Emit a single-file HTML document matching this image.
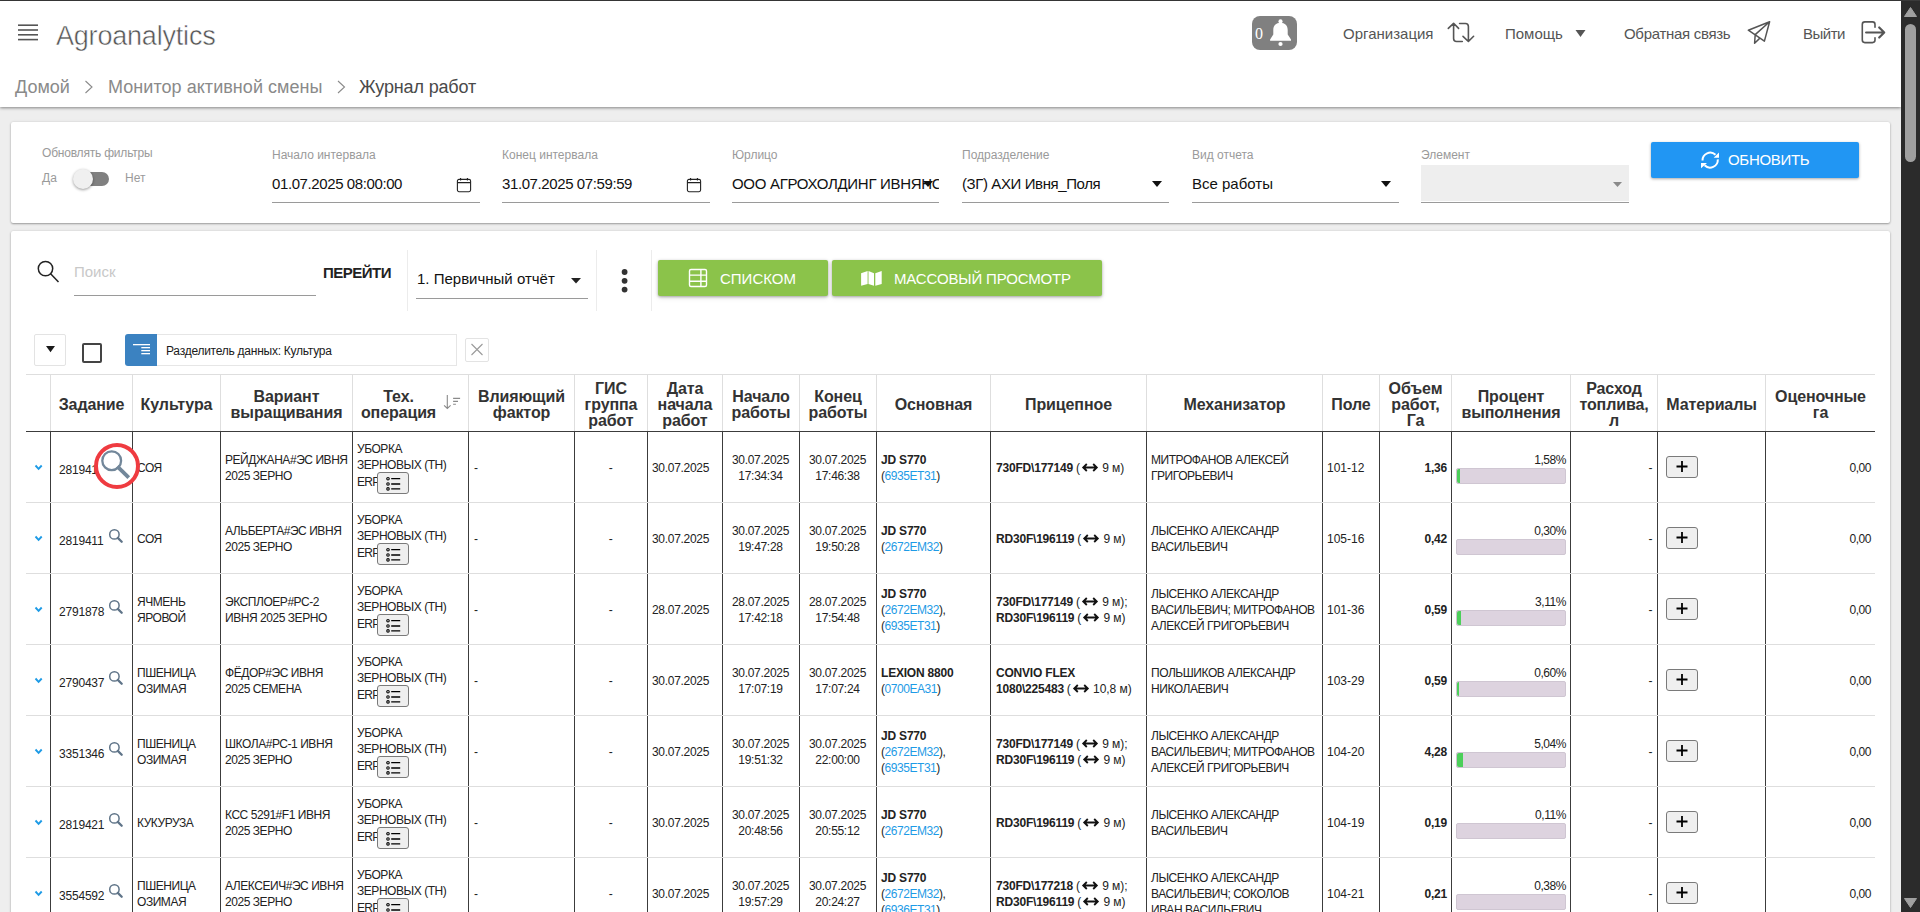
<!DOCTYPE html>
<html><head><meta charset="utf-8"><title>Agroanalytics</title><style>
*{box-sizing:border-box;margin:0;padding:0}
html,body{width:1920px;height:912px;overflow:hidden}
body{position:relative;background:#eeeeee;font-family:"Liberation Sans",sans-serif;color:#222}
.a{position:absolute}
.nw{white-space:nowrap}
svg{position:absolute;overflow:visible}
.hdr{left:0;top:1px;width:1901px;height:106px;background:#fff;box-shadow:0 1px 3px rgba(0,0,0,.45)}
.topline{left:0;top:0;width:1920px;height:1px;background:#3a3a3a}
.sb{left:1901px;top:1px;width:19px;height:911px;background:#2b2b2b}
.card{background:#fff;box-shadow:0 1px 2px rgba(0,0,0,.32),0 0 3px rgba(0,0,0,.10);border-radius:2px}
.t15{font-size:15px;line-height:16px;color:#555}
.lbl{font-size:12px;line-height:14px;color:#9a9a9a}
.val{font-size:15px;line-height:16px;color:#111}
.ul{height:1px;background:#9a9a9a}
.gbtn{background:#8bc34a;border-radius:2px;box-shadow:0 1px 3px rgba(0,0,0,.33),0 2px 6px rgba(0,0,0,.08);color:#fff}
.sep{width:1px;background:#ececec}
/* table */
.hl{background:#dedede}
.dl{background:#3c3c3c}
.th{display:flex;align-items:center;justify-content:center;text-align:center;font-weight:700;font-size:16px;line-height:16px;color:#333;letter-spacing:-0.1px}
.td{display:flex;align-items:center;font-size:12px;line-height:16px;color:#222;letter-spacing:-0.45px;white-space:nowrap}
.td b{font-weight:700;letter-spacing:-0.2px}
.lk{color:#1e9be6}
.arr{position:static;display:inline-block;vertical-align:0px;margin:0 1px 0 2px}
.tw{letter-spacing:-0.05px}
.c{justify-content:center;text-align:center}
.r{justify-content:flex-end;text-align:right}
.lbtn{display:inline-block;position:relative;width:32px;height:22px;border:1px solid #7a7a7a;border-radius:3px;background:#efefef;vertical-align:top}
.pbtn{position:absolute;width:32px;height:22px;border:1px solid #7a7a7a;border-radius:3px;background:#efefef}
.bar{position:relative;width:110px;height:16px;background:#ddd3df;border:1px solid #cfc6d2;border-radius:2px}
.fill{position:absolute;left:0;top:0;bottom:0;background:#4ccf5a;border-radius:2px 0 0 2px}
</style></head><body>
<div class="a topline"></div>
<div class="a hdr"></div>
<svg style="left:0;top:0" width="60" height="60"><g fill="#555"><rect x="18" y="24.4" width="20" height="1.6"/><rect x="18" y="29.2" width="20" height="1.6"/><rect x="18" y="34" width="20" height="1.6"/><rect x="18" y="38.8" width="20" height="1.6"/></g></svg>
<div class="a nw" style="left:56px;top:20px;font-size:27px;line-height:32px;color:#555;letter-spacing:-0.2px;-webkit-text-stroke:0.5px #fff">Agroanalytics</div>
<div class="a nw" style="left:15px;top:77px;font-size:18px;line-height:20px;color:#8a8a8a">Домой</div>
<svg style="left:0;top:0" width="1" height="1"><path d="M85.5 81 L92 87 L85.5 93" fill="none" stroke="#8a8a8a" stroke-width="1.1"/></svg>
<div class="a nw" style="left:108px;top:77px;font-size:18px;line-height:20px;color:#8a8a8a;letter-spacing:0.05px">Монитор активной смены</div>
<svg style="left:0;top:0" width="1" height="1"><path d="M338 81 L344.5 87 L338 93" fill="none" stroke="#8a8a8a" stroke-width="1.1"/></svg>
<div class="a nw" style="left:359px;top:77px;font-size:18px;line-height:20px;color:#4a4a4a;letter-spacing:-0.15px">Журнал работ</div>
<div class="a" style="left:1252px;top:16px;width:45px;height:34px;background:#808080;border-radius:8px"></div>
<div class="a nw" style="left:1255px;top:25px;font-size:16px;line-height:18px;color:#fff;font-family:Liberation Serif,serif">0</div>
<svg style="left:1248px;top:12px" width="60" height="45"><g fill="#fff"><path d="M32.5 10.8 C28 10.8 25.3 13.8 25.3 18 V22.5 L22.1 27.6 V28.8 H43 V27.6 L39.7 22.5 V18 C39.7 13.8 37 10.8 32.5 10.8 Z"/><circle cx="32.5" cy="9.4" r="2.1"/><circle cx="32.5" cy="32" r="2.1"/></g></svg>
<div class="a nw t15" style="left:1343px;top:26px">Организация</div>
<svg style="left:1440px;top:15px" width="40" height="35"><path d="M8.3 13.4 L13.6 8.3 L18.6 13.4 M13.6 8.5 V23.5 Q13.6 26.5 16.6 26.5 H22.3 M19.6 8.5 H25.4 Q28.4 8.5 28.4 11.5 V26.3 M23 21.3 L28.4 26.5 L33.6 21.3" fill="none" stroke="#555" stroke-width="1.6" stroke-linecap="round" stroke-linejoin="round"/></svg>
<div class="a nw t15" style="left:1505px;top:26px">Помощь</div>
<svg style="left:0;top:0" width="1" height="1"><path d="M1575.5 30 H1585.5 L1580.5 37 Z" fill="#555"/></svg>
<div class="a nw t15" style="left:1624px;top:26px;letter-spacing:-0.3px">Обратная связь</div>
<svg style="left:1740px;top:15px" width="40" height="35"><path d="M29.6 6.7 L8.3 15.2 L24.4 26.1 Z M29.6 6.7 L15.2 19.6 L14.6 28.2 L19.4 23.6" fill="none" stroke="#555" stroke-width="1.5" stroke-linejoin="round"/></svg>
<div class="a nw t15" style="left:1803px;top:26px;letter-spacing:-0.5px">Выйти</div>
<svg style="left:1855px;top:15px" width="40" height="35"><path d="M20 12.3 V9.4 Q20 6.9 17.5 6.9 H9.8 Q7.3 6.9 7.3 9.4 V25.1 Q7.3 27.6 9.8 27.6 H17.5 Q20 27.6 20 25.1 V22.8" fill="none" stroke="#555" stroke-width="1.6" stroke-linecap="round"/><path d="M11.1 17.5 H28.6 M24.2 12.5 L29.2 17.5 L24.2 22.5" fill="none" stroke="#555" stroke-width="2.2" stroke-linecap="round" stroke-linejoin="round"/></svg>
<div class="a sb"></div>
<svg style="left:0;top:0" width="1" height="1"><path d="M1910.5 7.5 L1916.5 16.5 H1904.5 Z" fill="#a0a0a0" stroke="#a0a0a0" stroke-width="1" stroke-linejoin="round"/><rect x="1905" y="24" width="11" height="138" rx="5.5" fill="#a0a0a0"/><path d="M1904.5 898.5 H1916.5 L1910.5 907.5 Z" fill="#a0a0a0" stroke="#a0a0a0" stroke-width="1" stroke-linejoin="round"/></svg>
<div class="a card" style="left:11px;top:122px;width:1879px;height:101px"></div>
<div class="a nw lbl" style="left:42px;top:146px;letter-spacing:-0.2px">Обновлять фильтры</div>
<div class="a nw lbl" style="left:42px;top:171px">Да</div>
<div class="a nw lbl" style="left:125px;top:171px">Нет</div>
<div class="a" style="left:74px;top:172px;width:35px;height:14px;border-radius:7px;background:#808080"></div>
<div class="a" style="left:73px;top:169px;width:20px;height:20px;border-radius:10px;background:#f0f0f0;box-shadow:0 1px 3px rgba(0,0,0,.4)"></div>
<div class="a nw lbl" style="left:272px;top:148px">Начало интервала</div>
<div class="a nw val" style="left:272px;top:176px;letter-spacing:-0.4px">01.07.2025 08:00:00</div>
<div class="a ul" style="left:272px;top:202px;width:208px"></div>
<svg style="left:450px;top:172px" width="30" height="30"><g fill="none" stroke="#222" stroke-width="1.1"><rect x="7.4" y="7.4" width="13.2" height="12.3" rx="1.6"/><path d="M7.4 10.6 H20.6 M10.6 6 V8.6 M17.4 6 V8.6"/></g></svg>
<div class="a nw lbl" style="left:502px;top:148px">Конец интервала</div>
<div class="a nw val" style="left:502px;top:176px;letter-spacing:-0.4px">31.07.2025 07:59:59</div>
<div class="a ul" style="left:502px;top:202px;width:208px"></div>
<svg style="left:680px;top:172px" width="30" height="30"><g fill="none" stroke="#222" stroke-width="1.1"><rect x="7.4" y="7.4" width="13.2" height="12.3" rx="1.6"/><path d="M7.4 10.6 H20.6 M10.6 6 V8.6 M17.4 6 V8.6"/></g></svg>
<div class="a nw val" style="left:732px;top:176px;width:207px;overflow:hidden;letter-spacing:-0.3px">ООО АГРОХОЛДИНГ ИВНЯНСКИЙ</div>
<div class="a nw lbl" style="left:732px;top:148px">Юрлицо</div>
<div class="a ul" style="left:732px;top:202px;width:207px"></div>
<svg style="left:0;top:0" width="1" height="1"><path d="M923 181 H933 L928 187 Z" fill="#111"/></svg>
<div class="a nw lbl" style="left:962px;top:148px">Подразделение</div>
<div class="a nw val" style="left:962px;top:176px;letter-spacing:-0.4px">(ЗГ) АХИ Ивня_Поля</div>
<div class="a ul" style="left:962px;top:202px;width:207px"></div>
<svg style="left:0;top:0" width="1" height="1"><path d="M1152 181 H1162 L1157 187 Z" fill="#111"/></svg>
<div class="a nw lbl" style="left:1192px;top:148px">Вид отчета</div>
<div class="a nw val" style="left:1192px;top:176px;">Все работы</div>
<div class="a ul" style="left:1192px;top:202px;width:207px"></div>
<svg style="left:0;top:0" width="1" height="1"><path d="M1381 181 H1391 L1386 187 Z" fill="#111"/></svg>
<div class="a" style="left:1421px;top:165px;width:208px;height:36px;background:#eeeeee"></div>
<div class="a nw lbl" style="left:1421px;top:148px">Элемент</div>
<div class="a ul" style="left:1421px;top:202px;width:208px"></div>
<svg style="left:0;top:0" width="1" height="1"><path d="M1613 182 H1622 L1617.5 187 Z" fill="#8a8a8a"/></svg>
<div class="a" style="left:1651px;top:142px;width:208px;height:36px;background:#2196f3;border-radius:2px;box-shadow:0 1px 3px rgba(0,0,0,.35)"></div>
<svg style="left:1690px;top:142px" width="40" height="36"><g fill="none" stroke="#fff" stroke-width="2"><path d="M12.5 18.5 A7.7 7.7 0 0 1 25.5 12.8"/><path d="M27.8 17.4 A7.7 7.7 0 0 1 14.6 23.2"/></g><g fill="#fff"><path d="M29 10.5 V15.8 H23.7 Z"/><path d="M11 20.9 H17 L11 26.2 Z"/></g></svg>
<div class="a nw" style="left:1728px;top:152px;font-size:15px;line-height:16px;color:#fff;letter-spacing:-0.3px">ОБНОВИТЬ</div>
<div class="a card" style="left:11px;top:231px;width:1879px;height:700px"></div>
<svg style="left:0;top:0" width="1" height="1"><g fill="none" stroke="#222" stroke-width="1.5"><circle cx="45.5" cy="268.6" r="7.2"/><path d="M50.6 273.7 L58.5 282"/></g></svg>
<div class="a nw" style="left:74px;top:264px;font-size:15px;line-height:16px;color:#c8c8c8">Поиск</div>
<div class="a ul" style="left:74px;top:295px;width:242px"></div>
<div class="a nw" style="left:323px;top:265px;font-size:15px;line-height:16px;color:#222;font-weight:700;letter-spacing:-0.5px">ПЕРЕЙТИ</div>
<div class="a sep" style="left:407px;top:250px;height:61px"></div>
<div class="a sep" style="left:596px;top:250px;height:61px"></div>
<div class="a sep" style="left:651px;top:250px;height:61px"></div>
<div class="a nw val" style="left:417px;top:271px">1. Первичный отчёт</div>
<svg style="left:0;top:0" width="1" height="1"><path d="M571 278 H581 L576 283.5 Z" fill="#222"/><g fill="#333"><circle cx="624.6" cy="272" r="2.9"/><circle cx="624.6" cy="280.8" r="2.9"/><circle cx="624.6" cy="289.6" r="2.9"/></g></svg>
<div class="a ul" style="left:416px;top:298px;width:172px"></div>
<div class="a gbtn" style="left:658px;top:260px;width:170px;height:36px"></div>
<svg style="left:0;top:0" width="1" height="1"><g fill="none" stroke="#fff" stroke-width="1.4"><rect x="689.5" y="269.5" width="17" height="17" rx="1.5"/><path d="M689.5 275.1 H706.5 M689.5 281.3 H706.5 M700.9 269.5 V286.5"/></g></svg>
<div class="a nw" style="left:720px;top:271px;font-size:15px;line-height:16px;color:#fff">СПИСКОМ</div>
<div class="a gbtn" style="left:832px;top:260px;width:270px;height:36px"></div>
<svg style="left:855px;top:264px" width="35" height="30"><g fill="#fff"><path d="M6.1 9.2 L12.6 7.1 V20 L6.1 21.8 Z"/><path d="M13.5 7.1 L19 9.2 V21.8 L13.5 20 Z"/><path d="M20.3 9.2 L26.7 7.1 V20 L20.3 21.8 Z"/></g></svg>
<div class="a nw" style="left:894px;top:271px;font-size:15px;line-height:16px;color:#fff;letter-spacing:-0.15px">МАССОВЫЙ ПРОСМОТР</div>
<div class="a" style="left:34px;top:334px;width:32px;height:32px;border:1px solid #e3e3e3;border-radius:2px"></div>
<svg style="left:0;top:0" width="1" height="1"><path d="M46 346 H55 L50.5 352.3 Z" fill="#1a1a1a"/></svg>
<div class="a" style="left:82px;top:343px;width:20px;height:20px;border:2px solid #444;border-radius:2px"></div>
<div class="a" style="left:125px;top:334px;width:32px;height:32px;background:#3b82c1;border-radius:3px 0 0 3px"></div>
<svg style="left:0;top:0" width="1" height="1"><g fill="#fff"><rect x="133" y="344" width="17" height="1.3"/><rect x="141.3" y="347" width="8.7" height="1.3"/><rect x="141.3" y="350" width="8.7" height="1.3"/><rect x="141.3" y="353" width="8.7" height="1.3"/></g></svg>
<div class="a" style="left:157px;top:334px;width:300px;height:32px;border:1px solid #e6e6e6;border-left:none"></div>
<div class="a nw" style="left:166px;top:344px;font-size:12px;line-height:14px;color:#1a1a1a;letter-spacing:-0.25px">Разделитель данных: Культура</div>
<div class="a" style="left:465px;top:338px;width:24px;height:24px;border:1px solid #e3e3e3;border-radius:2px"></div>
<svg style="left:0;top:0" width="1" height="1"><path d="M471.5 344 L482.5 355 M482.5 344 L471.5 355" stroke="#9a9a9a" stroke-width="1.1"/></svg>
<div class="a hl" style="left:26px;top:374px;width:1849px;height:1px"></div>
<div class="a hl" style="left:50px;top:374px;width:1px;height:57px"></div>
<div class="a hl" style="left:132px;top:374px;width:1px;height:57px"></div>
<div class="a hl" style="left:220px;top:374px;width:1px;height:57px"></div>
<div class="a hl" style="left:352px;top:374px;width:1px;height:57px"></div>
<div class="a hl" style="left:468px;top:374px;width:1px;height:57px"></div>
<div class="a hl" style="left:574px;top:374px;width:1px;height:57px"></div>
<div class="a hl" style="left:647px;top:374px;width:1px;height:57px"></div>
<div class="a hl" style="left:722px;top:374px;width:1px;height:57px"></div>
<div class="a hl" style="left:799px;top:374px;width:1px;height:57px"></div>
<div class="a hl" style="left:876px;top:374px;width:1px;height:57px"></div>
<div class="a hl" style="left:990px;top:374px;width:1px;height:57px"></div>
<div class="a hl" style="left:1146px;top:374px;width:1px;height:57px"></div>
<div class="a hl" style="left:1322px;top:374px;width:1px;height:57px"></div>
<div class="a hl" style="left:1379px;top:374px;width:1px;height:57px"></div>
<div class="a hl" style="left:1451px;top:374px;width:1px;height:57px"></div>
<div class="a hl" style="left:1570px;top:374px;width:1px;height:57px"></div>
<div class="a hl" style="left:1657px;top:374px;width:1px;height:57px"></div>
<div class="a hl" style="left:1765px;top:374px;width:1px;height:57px"></div>
<div class="a dl" style="left:26px;top:431px;width:1849px;height:1px"></div>
<div class="a th" style="left:51px;top:377px;width:81px;height:56px;padding-right:0px">Задание</div>
<div class="a th" style="left:133px;top:377px;width:87px;height:56px;padding-right:0px">Культура</div>
<div class="a th" style="left:221px;top:377px;width:131px;height:56px;padding-right:0px">Вариант<br>выращивания</div>
<div class="a th" style="left:353px;top:377px;width:115px;height:56px;padding-right:24px">Тех.<br>операция</div>
<div class="a th" style="left:469px;top:377px;width:105px;height:56px;padding-right:0px">Влияющий<br>фактор</div>
<div class="a th" style="left:575px;top:377px;width:72px;height:56px;padding-right:0px">ГИС<br>группа<br>работ</div>
<div class="a th" style="left:648px;top:377px;width:74px;height:56px;padding-right:0px">Дата<br>начала<br>работ</div>
<div class="a th" style="left:723px;top:377px;width:76px;height:56px;padding-right:0px">Начало<br>работы</div>
<div class="a th" style="left:800px;top:377px;width:76px;height:56px;padding-right:0px">Конец<br>работы</div>
<div class="a th" style="left:877px;top:377px;width:113px;height:56px;padding-right:0px">Основная</div>
<div class="a th" style="left:991px;top:377px;width:155px;height:56px;padding-right:0px">Прицепное</div>
<div class="a th" style="left:1147px;top:377px;width:175px;height:56px;padding-right:0px">Механизатор</div>
<div class="a th" style="left:1323px;top:377px;width:56px;height:56px;padding-right:0px">Поле</div>
<div class="a th" style="left:1380px;top:377px;width:71px;height:56px;padding-right:0px">Объем<br>работ,<br>Га</div>
<div class="a th" style="left:1452px;top:377px;width:118px;height:56px;padding-right:0px">Процент<br>выполнения</div>
<div class="a th" style="left:1571px;top:377px;width:86px;height:56px;padding-right:0px">Расход<br>топлива,<br>л</div>
<div class="a th" style="left:1658px;top:377px;width:107px;height:56px;padding-right:0px">Материалы</div>
<div class="a th" style="left:1766px;top:377px;width:109px;height:56px;padding-right:0px">Оценочные<br>га</div>
<svg style="left:438px;top:390px" width="28" height="24"><g fill="none" stroke="#8a8a8a" stroke-width="1.1"><path d="M9.3 5 V18.2 M6.1 15.3 L9.3 18.4 L12.6 15.3"/><path d="M15.1 8.4 H22.1 M15.1 11.4 H20 M15.1 14.3 H17.9"/></g></svg>
<div class="a hl" style="left:26px;top:502px;width:1849px;height:1px"></div>
<div class="a dl" style="left:50px;top:432px;width:1px;height:70px"></div>
<div class="a dl" style="left:132px;top:432px;width:1px;height:70px"></div>
<div class="a dl" style="left:220px;top:432px;width:1px;height:70px"></div>
<div class="a dl" style="left:352px;top:432px;width:1px;height:70px"></div>
<div class="a dl" style="left:468px;top:432px;width:1px;height:70px"></div>
<div class="a dl" style="left:574px;top:432px;width:1px;height:70px"></div>
<div class="a dl" style="left:647px;top:432px;width:1px;height:70px"></div>
<div class="a dl" style="left:722px;top:432px;width:1px;height:70px"></div>
<div class="a dl" style="left:799px;top:432px;width:1px;height:70px"></div>
<div class="a dl" style="left:876px;top:432px;width:1px;height:70px"></div>
<div class="a dl" style="left:990px;top:432px;width:1px;height:70px"></div>
<div class="a dl" style="left:1146px;top:432px;width:1px;height:70px"></div>
<div class="a dl" style="left:1322px;top:432px;width:1px;height:70px"></div>
<div class="a dl" style="left:1379px;top:432px;width:1px;height:70px"></div>
<div class="a dl" style="left:1451px;top:432px;width:1px;height:70px"></div>
<div class="a dl" style="left:1570px;top:432px;width:1px;height:70px"></div>
<div class="a dl" style="left:1657px;top:432px;width:1px;height:70px"></div>
<div class="a dl" style="left:1765px;top:432px;width:1px;height:70px"></div>
<svg style="left:0;top:0" width="1" height="1"><path d="M35.5 465.5 L38.6 468.8 L41.7 465.5" fill="none" stroke="#1e9be6" stroke-width="1.9"/></svg>
<div class="a td " style="left:59px;top:435px;width:68px;height:70px;letter-spacing:-0.2px"><div>2819411</div></div>
<svg style="left:0;top:0" width="1" height="1"><g fill="none" stroke="#5f7488"><circle cx="114.4" cy="463.4" r="4.7" stroke-width="1.5"/><path d="M117.8 466.9 L121.7 470.8" stroke-width="2.3" stroke-linecap="round"/></g></svg>
<div class="a td " style="left:137px;top:433px;width:78px;height:70px;"><div>СОЯ</div></div>
<div class="a td " style="left:225px;top:433px;width:122px;height:70px;"><div>РЕЙДЖАНА#ЭС ИВНЯ<br>2025 ЗЕРНО</div></div>
<div class="a td " style="left:357px;top:432px;width:106px;height:70px;"><div><div style="display:flex;flex-direction:column"><div style="height:16px">УБОРКА</div><div style="height:16px">ЗЕРНОВЫХ (ТН)</div><div style="height:21px;display:flex;align-items:flex-start"><span style="margin-top:1px;letter-spacing:-0.75px">ERP</span><span class="lbtn" style="margin-left:-2px;margin-top:-1px"><svg style="left:0;top:0" width="31" height="21"><g fill="none" stroke="#000" stroke-width="1"><circle cx="10" cy="5.7" r="1.25" stroke-width="1.1"/><circle cx="10" cy="11" r="1.25" stroke-width="1.1"/><circle cx="10" cy="15.9" r="1.25" stroke-width="1.1"/><path d="M13.2 5.6 H22.2 M13.2 11 H22.2 M13.2 15.9 H22.2" stroke-width="1.3"/></g></svg></span></div></div></div></div>
<div class="a td " style="left:474px;top:433px;width:95px;height:70px;"><div>-</div></div>
<div class="a td c" style="left:579px;top:433px;width:63px;height:70px;"><div>-</div></div>
<div class="a td " style="left:652px;top:433px;width:65px;height:70px;letter-spacing:-0.3px"><div>30.07.2025</div></div>
<div class="a td c" style="left:724px;top:433px;width:73px;height:70px;letter-spacing:-0.3px"><div>30.07.2025<br>17:34:34</div></div>
<div class="a td c" style="left:801px;top:433px;width:73px;height:70px;letter-spacing:-0.3px"><div>30.07.2025<br>17:46:38</div></div>
<div class="a td " style="left:881px;top:433px;width:104px;height:70px;"><div><b>JD S770</b><br>(<span class="lk">6935ET31</span>)</div></div>
<div class="a td " style="left:996px;top:433px;width:145px;height:70px;"><div><b>730FD\177149</b> <span class="tw">(<svg class="arr" width="16" height="9" viewBox="0 0 16 9"><path d="M1.2 4.5 H14.8 M4.8 1 L1.2 4.5 L4.8 8 M11.2 1 L14.8 4.5 L11.2 8" stroke="#111" stroke-width="1.8" fill="none"/></svg> 9 м)</span></div></div>
<div class="a td " style="left:1151px;top:433px;width:166px;height:70px;"><div>МИТРОФАНОВ АЛЕКСЕЙ<br>ГРИГОРЬЕВИЧ</div></div>
<div class="a td " style="left:1327px;top:433px;width:47px;height:70px;letter-spacing:0px"><div>101-12</div></div>
<div class="a td r" style="left:1384px;top:433px;width:63px;height:70px;"><div><b>1,36</b></div></div>
<div class="a td " style="left:1456px;top:433px;width:110px;height:70px;"><div><div style="display:flex;flex-direction:column;align-items:flex-end;margin-top:0px"><div style="height:16px;line-height:16px">1,58%</div><div class="bar"><div class="fill" style="width:3px"></div></div></div></div></div>
<div class="a td r" style="left:1575px;top:433px;width:77px;height:70px;"><div>-</div></div>
<div class="pbtn" style="left:1666px;top:456px"></div>
<svg style="left:0;top:0" width="1" height="1"><path d="M1676.5 466.5 H1687.5 M1682 461 V472" stroke="#000" stroke-width="1.8"/></svg>
<div class="a td r" style="left:1770px;top:433px;width:101px;height:70px;"><div>0,00</div></div>
<div class="a hl" style="left:26px;top:573px;width:1849px;height:1px"></div>
<div class="a dl" style="left:50px;top:503px;width:1px;height:70px"></div>
<div class="a dl" style="left:132px;top:503px;width:1px;height:70px"></div>
<div class="a dl" style="left:220px;top:503px;width:1px;height:70px"></div>
<div class="a dl" style="left:352px;top:503px;width:1px;height:70px"></div>
<div class="a dl" style="left:468px;top:503px;width:1px;height:70px"></div>
<div class="a dl" style="left:574px;top:503px;width:1px;height:70px"></div>
<div class="a dl" style="left:647px;top:503px;width:1px;height:70px"></div>
<div class="a dl" style="left:722px;top:503px;width:1px;height:70px"></div>
<div class="a dl" style="left:799px;top:503px;width:1px;height:70px"></div>
<div class="a dl" style="left:876px;top:503px;width:1px;height:70px"></div>
<div class="a dl" style="left:990px;top:503px;width:1px;height:70px"></div>
<div class="a dl" style="left:1146px;top:503px;width:1px;height:70px"></div>
<div class="a dl" style="left:1322px;top:503px;width:1px;height:70px"></div>
<div class="a dl" style="left:1379px;top:503px;width:1px;height:70px"></div>
<div class="a dl" style="left:1451px;top:503px;width:1px;height:70px"></div>
<div class="a dl" style="left:1570px;top:503px;width:1px;height:70px"></div>
<div class="a dl" style="left:1657px;top:503px;width:1px;height:70px"></div>
<div class="a dl" style="left:1765px;top:503px;width:1px;height:70px"></div>
<svg style="left:0;top:0" width="1" height="1"><path d="M35.5 536.5 L38.6 539.8 L41.7 536.5" fill="none" stroke="#1e9be6" stroke-width="1.9"/></svg>
<div class="a td " style="left:59px;top:506px;width:68px;height:70px;letter-spacing:-0.2px"><div>2819411</div></div>
<svg style="left:0;top:0" width="1" height="1"><g fill="none" stroke="#5f7488"><circle cx="114.4" cy="534.4" r="4.7" stroke-width="1.5"/><path d="M117.8 537.9 L121.7 541.8" stroke-width="2.3" stroke-linecap="round"/></g></svg>
<div class="a td " style="left:137px;top:504px;width:78px;height:70px;"><div>СОЯ</div></div>
<div class="a td " style="left:225px;top:504px;width:122px;height:70px;"><div>АЛЬБЕРТА#ЭС ИВНЯ<br>2025 ЗЕРНО</div></div>
<div class="a td " style="left:357px;top:503px;width:106px;height:70px;"><div><div style="display:flex;flex-direction:column"><div style="height:16px">УБОРКА</div><div style="height:16px">ЗЕРНОВЫХ (ТН)</div><div style="height:21px;display:flex;align-items:flex-start"><span style="margin-top:1px;letter-spacing:-0.75px">ERP</span><span class="lbtn" style="margin-left:-2px;margin-top:-1px"><svg style="left:0;top:0" width="31" height="21"><g fill="none" stroke="#000" stroke-width="1"><circle cx="10" cy="5.7" r="1.25" stroke-width="1.1"/><circle cx="10" cy="11" r="1.25" stroke-width="1.1"/><circle cx="10" cy="15.9" r="1.25" stroke-width="1.1"/><path d="M13.2 5.6 H22.2 M13.2 11 H22.2 M13.2 15.9 H22.2" stroke-width="1.3"/></g></svg></span></div></div></div></div>
<div class="a td " style="left:474px;top:504px;width:95px;height:70px;"><div>-</div></div>
<div class="a td c" style="left:579px;top:504px;width:63px;height:70px;"><div>-</div></div>
<div class="a td " style="left:652px;top:504px;width:65px;height:70px;letter-spacing:-0.3px"><div>30.07.2025</div></div>
<div class="a td c" style="left:724px;top:504px;width:73px;height:70px;letter-spacing:-0.3px"><div>30.07.2025<br>19:47:28</div></div>
<div class="a td c" style="left:801px;top:504px;width:73px;height:70px;letter-spacing:-0.3px"><div>30.07.2025<br>19:50:28</div></div>
<div class="a td " style="left:881px;top:504px;width:104px;height:70px;"><div><b>JD S770</b><br>(<span class="lk">2672EM32</span>)</div></div>
<div class="a td " style="left:996px;top:504px;width:145px;height:70px;"><div><b>RD30F\196119</b> <span class="tw">(<svg class="arr" width="16" height="9" viewBox="0 0 16 9"><path d="M1.2 4.5 H14.8 M4.8 1 L1.2 4.5 L4.8 8 M11.2 1 L14.8 4.5 L11.2 8" stroke="#111" stroke-width="1.8" fill="none"/></svg> 9 м)</span></div></div>
<div class="a td " style="left:1151px;top:504px;width:166px;height:70px;"><div>ЛЫСЕНКО АЛЕКСАНДР<br>ВАСИЛЬЕВИЧ</div></div>
<div class="a td " style="left:1327px;top:504px;width:47px;height:70px;letter-spacing:0px"><div>105-16</div></div>
<div class="a td r" style="left:1384px;top:504px;width:63px;height:70px;"><div><b>0,42</b></div></div>
<div class="a td " style="left:1456px;top:504px;width:110px;height:70px;"><div><div style="display:flex;flex-direction:column;align-items:flex-end;margin-top:0px"><div style="height:16px;line-height:16px">0,30%</div><div class="bar"></div></div></div></div>
<div class="a td r" style="left:1575px;top:504px;width:77px;height:70px;"><div>-</div></div>
<div class="pbtn" style="left:1666px;top:527px"></div>
<svg style="left:0;top:0" width="1" height="1"><path d="M1676.5 537.5 H1687.5 M1682 532 V543" stroke="#000" stroke-width="1.8"/></svg>
<div class="a td r" style="left:1770px;top:504px;width:101px;height:70px;"><div>0,00</div></div>
<div class="a hl" style="left:26px;top:644px;width:1849px;height:1px"></div>
<div class="a dl" style="left:50px;top:574px;width:1px;height:70px"></div>
<div class="a dl" style="left:132px;top:574px;width:1px;height:70px"></div>
<div class="a dl" style="left:220px;top:574px;width:1px;height:70px"></div>
<div class="a dl" style="left:352px;top:574px;width:1px;height:70px"></div>
<div class="a dl" style="left:468px;top:574px;width:1px;height:70px"></div>
<div class="a dl" style="left:574px;top:574px;width:1px;height:70px"></div>
<div class="a dl" style="left:647px;top:574px;width:1px;height:70px"></div>
<div class="a dl" style="left:722px;top:574px;width:1px;height:70px"></div>
<div class="a dl" style="left:799px;top:574px;width:1px;height:70px"></div>
<div class="a dl" style="left:876px;top:574px;width:1px;height:70px"></div>
<div class="a dl" style="left:990px;top:574px;width:1px;height:70px"></div>
<div class="a dl" style="left:1146px;top:574px;width:1px;height:70px"></div>
<div class="a dl" style="left:1322px;top:574px;width:1px;height:70px"></div>
<div class="a dl" style="left:1379px;top:574px;width:1px;height:70px"></div>
<div class="a dl" style="left:1451px;top:574px;width:1px;height:70px"></div>
<div class="a dl" style="left:1570px;top:574px;width:1px;height:70px"></div>
<div class="a dl" style="left:1657px;top:574px;width:1px;height:70px"></div>
<div class="a dl" style="left:1765px;top:574px;width:1px;height:70px"></div>
<svg style="left:0;top:0" width="1" height="1"><path d="M35.5 607.5 L38.6 610.8 L41.7 607.5" fill="none" stroke="#1e9be6" stroke-width="1.9"/></svg>
<div class="a td " style="left:59px;top:577px;width:68px;height:70px;letter-spacing:-0.2px"><div>2791878</div></div>
<svg style="left:0;top:0" width="1" height="1"><g fill="none" stroke="#5f7488"><circle cx="114.4" cy="605.4" r="4.7" stroke-width="1.5"/><path d="M117.8 608.9 L121.7 612.8" stroke-width="2.3" stroke-linecap="round"/></g></svg>
<div class="a td " style="left:137px;top:575px;width:78px;height:70px;"><div>ЯЧМЕНЬ<br>ЯРОВОЙ</div></div>
<div class="a td " style="left:225px;top:575px;width:122px;height:70px;"><div>ЭКСПЛОЕР#РС-2<br>ИВНЯ 2025 ЗЕРНО</div></div>
<div class="a td " style="left:357px;top:574px;width:106px;height:70px;"><div><div style="display:flex;flex-direction:column"><div style="height:16px">УБОРКА</div><div style="height:16px">ЗЕРНОВЫХ (ТН)</div><div style="height:21px;display:flex;align-items:flex-start"><span style="margin-top:1px;letter-spacing:-0.75px">ERP</span><span class="lbtn" style="margin-left:-2px;margin-top:-1px"><svg style="left:0;top:0" width="31" height="21"><g fill="none" stroke="#000" stroke-width="1"><circle cx="10" cy="5.7" r="1.25" stroke-width="1.1"/><circle cx="10" cy="11" r="1.25" stroke-width="1.1"/><circle cx="10" cy="15.9" r="1.25" stroke-width="1.1"/><path d="M13.2 5.6 H22.2 M13.2 11 H22.2 M13.2 15.9 H22.2" stroke-width="1.3"/></g></svg></span></div></div></div></div>
<div class="a td " style="left:474px;top:575px;width:95px;height:70px;"><div>-</div></div>
<div class="a td c" style="left:579px;top:575px;width:63px;height:70px;"><div>-</div></div>
<div class="a td " style="left:652px;top:575px;width:65px;height:70px;letter-spacing:-0.3px"><div>28.07.2025</div></div>
<div class="a td c" style="left:724px;top:575px;width:73px;height:70px;letter-spacing:-0.3px"><div>28.07.2025<br>17:42:18</div></div>
<div class="a td c" style="left:801px;top:575px;width:73px;height:70px;letter-spacing:-0.3px"><div>28.07.2025<br>17:54:48</div></div>
<div class="a td " style="left:881px;top:575px;width:104px;height:70px;"><div><b>JD S770</b><br>(<span class="lk">2672EM32</span>),<br>(<span class="lk">6935ET31</span>)</div></div>
<div class="a td " style="left:996px;top:575px;width:145px;height:70px;"><div><b>730FD\177149</b> <span class="tw">(<svg class="arr" width="16" height="9" viewBox="0 0 16 9"><path d="M1.2 4.5 H14.8 M4.8 1 L1.2 4.5 L4.8 8 M11.2 1 L14.8 4.5 L11.2 8" stroke="#111" stroke-width="1.8" fill="none"/></svg> 9 м)</span>;<br><b>RD30F\196119</b> <span class="tw">(<svg class="arr" width="16" height="9" viewBox="0 0 16 9"><path d="M1.2 4.5 H14.8 M4.8 1 L1.2 4.5 L4.8 8 M11.2 1 L14.8 4.5 L11.2 8" stroke="#111" stroke-width="1.8" fill="none"/></svg> 9 м)</span></div></div>
<div class="a td " style="left:1151px;top:575px;width:166px;height:70px;"><div>ЛЫСЕНКО АЛЕКСАНДР<br>ВАСИЛЬЕВИЧ; МИТРОФАНОВ<br>АЛЕКСЕЙ ГРИГОРЬЕВИЧ</div></div>
<div class="a td " style="left:1327px;top:575px;width:47px;height:70px;letter-spacing:0px"><div>101-36</div></div>
<div class="a td r" style="left:1384px;top:575px;width:63px;height:70px;"><div><b>0,59</b></div></div>
<div class="a td " style="left:1456px;top:575px;width:110px;height:70px;"><div><div style="display:flex;flex-direction:column;align-items:flex-end;margin-top:0px"><div style="height:16px;line-height:16px">3,11%</div><div class="bar"><div class="fill" style="width:4px"></div></div></div></div></div>
<div class="a td r" style="left:1575px;top:575px;width:77px;height:70px;"><div>-</div></div>
<div class="pbtn" style="left:1666px;top:598px"></div>
<svg style="left:0;top:0" width="1" height="1"><path d="M1676.5 608.5 H1687.5 M1682 603 V614" stroke="#000" stroke-width="1.8"/></svg>
<div class="a td r" style="left:1770px;top:575px;width:101px;height:70px;"><div>0,00</div></div>
<div class="a hl" style="left:26px;top:715px;width:1849px;height:1px"></div>
<div class="a dl" style="left:50px;top:645px;width:1px;height:70px"></div>
<div class="a dl" style="left:132px;top:645px;width:1px;height:70px"></div>
<div class="a dl" style="left:220px;top:645px;width:1px;height:70px"></div>
<div class="a dl" style="left:352px;top:645px;width:1px;height:70px"></div>
<div class="a dl" style="left:468px;top:645px;width:1px;height:70px"></div>
<div class="a dl" style="left:574px;top:645px;width:1px;height:70px"></div>
<div class="a dl" style="left:647px;top:645px;width:1px;height:70px"></div>
<div class="a dl" style="left:722px;top:645px;width:1px;height:70px"></div>
<div class="a dl" style="left:799px;top:645px;width:1px;height:70px"></div>
<div class="a dl" style="left:876px;top:645px;width:1px;height:70px"></div>
<div class="a dl" style="left:990px;top:645px;width:1px;height:70px"></div>
<div class="a dl" style="left:1146px;top:645px;width:1px;height:70px"></div>
<div class="a dl" style="left:1322px;top:645px;width:1px;height:70px"></div>
<div class="a dl" style="left:1379px;top:645px;width:1px;height:70px"></div>
<div class="a dl" style="left:1451px;top:645px;width:1px;height:70px"></div>
<div class="a dl" style="left:1570px;top:645px;width:1px;height:70px"></div>
<div class="a dl" style="left:1657px;top:645px;width:1px;height:70px"></div>
<div class="a dl" style="left:1765px;top:645px;width:1px;height:70px"></div>
<svg style="left:0;top:0" width="1" height="1"><path d="M35.5 678.5 L38.6 681.8 L41.7 678.5" fill="none" stroke="#1e9be6" stroke-width="1.9"/></svg>
<div class="a td " style="left:59px;top:648px;width:68px;height:70px;letter-spacing:-0.2px"><div>2790437</div></div>
<svg style="left:0;top:0" width="1" height="1"><g fill="none" stroke="#5f7488"><circle cx="114.4" cy="676.4" r="4.7" stroke-width="1.5"/><path d="M117.8 679.9 L121.7 683.8" stroke-width="2.3" stroke-linecap="round"/></g></svg>
<div class="a td " style="left:137px;top:646px;width:78px;height:70px;"><div>ПШЕНИЦА<br>ОЗИМАЯ</div></div>
<div class="a td " style="left:225px;top:646px;width:122px;height:70px;"><div>ФЁДОР#ЭС ИВНЯ<br>2025 СЕМЕНА</div></div>
<div class="a td " style="left:357px;top:645px;width:106px;height:70px;"><div><div style="display:flex;flex-direction:column"><div style="height:16px">УБОРКА</div><div style="height:16px">ЗЕРНОВЫХ (ТН)</div><div style="height:21px;display:flex;align-items:flex-start"><span style="margin-top:1px;letter-spacing:-0.75px">ERP</span><span class="lbtn" style="margin-left:-2px;margin-top:-1px"><svg style="left:0;top:0" width="31" height="21"><g fill="none" stroke="#000" stroke-width="1"><circle cx="10" cy="5.7" r="1.25" stroke-width="1.1"/><circle cx="10" cy="11" r="1.25" stroke-width="1.1"/><circle cx="10" cy="15.9" r="1.25" stroke-width="1.1"/><path d="M13.2 5.6 H22.2 M13.2 11 H22.2 M13.2 15.9 H22.2" stroke-width="1.3"/></g></svg></span></div></div></div></div>
<div class="a td " style="left:474px;top:646px;width:95px;height:70px;"><div>-</div></div>
<div class="a td c" style="left:579px;top:646px;width:63px;height:70px;"><div>-</div></div>
<div class="a td " style="left:652px;top:646px;width:65px;height:70px;letter-spacing:-0.3px"><div>30.07.2025</div></div>
<div class="a td c" style="left:724px;top:646px;width:73px;height:70px;letter-spacing:-0.3px"><div>30.07.2025<br>17:07:19</div></div>
<div class="a td c" style="left:801px;top:646px;width:73px;height:70px;letter-spacing:-0.3px"><div>30.07.2025<br>17:07:24</div></div>
<div class="a td " style="left:881px;top:646px;width:104px;height:70px;"><div><b>LEXION 8800</b><br>(<span class="lk">0700EA31</span>)</div></div>
<div class="a td " style="left:996px;top:646px;width:145px;height:70px;"><div><b>CONVIO FLEX</b><br><b>1080\225483</b> <span class="tw">(<svg class="arr" width="16" height="9" viewBox="0 0 16 9"><path d="M1.2 4.5 H14.8 M4.8 1 L1.2 4.5 L4.8 8 M11.2 1 L14.8 4.5 L11.2 8" stroke="#111" stroke-width="1.8" fill="none"/></svg> 10,8 м)</span></div></div>
<div class="a td " style="left:1151px;top:646px;width:166px;height:70px;"><div>ПОЛЬШИКОВ АЛЕКСАНДР<br>НИКОЛАЕВИЧ</div></div>
<div class="a td " style="left:1327px;top:646px;width:47px;height:70px;letter-spacing:0px"><div>103-29</div></div>
<div class="a td r" style="left:1384px;top:646px;width:63px;height:70px;"><div><b>0,59</b></div></div>
<div class="a td " style="left:1456px;top:646px;width:110px;height:70px;"><div><div style="display:flex;flex-direction:column;align-items:flex-end;margin-top:0px"><div style="height:16px;line-height:16px">0,60%</div><div class="bar"><div class="fill" style="width:1.5px"></div></div></div></div></div>
<div class="a td r" style="left:1575px;top:646px;width:77px;height:70px;"><div>-</div></div>
<div class="pbtn" style="left:1666px;top:669px"></div>
<svg style="left:0;top:0" width="1" height="1"><path d="M1676.5 679.5 H1687.5 M1682 674 V685" stroke="#000" stroke-width="1.8"/></svg>
<div class="a td r" style="left:1770px;top:646px;width:101px;height:70px;"><div>0,00</div></div>
<div class="a hl" style="left:26px;top:786px;width:1849px;height:1px"></div>
<div class="a dl" style="left:50px;top:716px;width:1px;height:70px"></div>
<div class="a dl" style="left:132px;top:716px;width:1px;height:70px"></div>
<div class="a dl" style="left:220px;top:716px;width:1px;height:70px"></div>
<div class="a dl" style="left:352px;top:716px;width:1px;height:70px"></div>
<div class="a dl" style="left:468px;top:716px;width:1px;height:70px"></div>
<div class="a dl" style="left:574px;top:716px;width:1px;height:70px"></div>
<div class="a dl" style="left:647px;top:716px;width:1px;height:70px"></div>
<div class="a dl" style="left:722px;top:716px;width:1px;height:70px"></div>
<div class="a dl" style="left:799px;top:716px;width:1px;height:70px"></div>
<div class="a dl" style="left:876px;top:716px;width:1px;height:70px"></div>
<div class="a dl" style="left:990px;top:716px;width:1px;height:70px"></div>
<div class="a dl" style="left:1146px;top:716px;width:1px;height:70px"></div>
<div class="a dl" style="left:1322px;top:716px;width:1px;height:70px"></div>
<div class="a dl" style="left:1379px;top:716px;width:1px;height:70px"></div>
<div class="a dl" style="left:1451px;top:716px;width:1px;height:70px"></div>
<div class="a dl" style="left:1570px;top:716px;width:1px;height:70px"></div>
<div class="a dl" style="left:1657px;top:716px;width:1px;height:70px"></div>
<div class="a dl" style="left:1765px;top:716px;width:1px;height:70px"></div>
<svg style="left:0;top:0" width="1" height="1"><path d="M35.5 749.5 L38.6 752.8 L41.7 749.5" fill="none" stroke="#1e9be6" stroke-width="1.9"/></svg>
<div class="a td " style="left:59px;top:719px;width:68px;height:70px;letter-spacing:-0.2px"><div>3351346</div></div>
<svg style="left:0;top:0" width="1" height="1"><g fill="none" stroke="#5f7488"><circle cx="114.4" cy="747.4" r="4.7" stroke-width="1.5"/><path d="M117.8 750.9 L121.7 754.8" stroke-width="2.3" stroke-linecap="round"/></g></svg>
<div class="a td " style="left:137px;top:717px;width:78px;height:70px;"><div>ПШЕНИЦА<br>ОЗИМАЯ</div></div>
<div class="a td " style="left:225px;top:717px;width:122px;height:70px;"><div>ШКОЛА#РС-1 ИВНЯ<br>2025 ЗЕРНО</div></div>
<div class="a td " style="left:357px;top:716px;width:106px;height:70px;"><div><div style="display:flex;flex-direction:column"><div style="height:16px">УБОРКА</div><div style="height:16px">ЗЕРНОВЫХ (ТН)</div><div style="height:21px;display:flex;align-items:flex-start"><span style="margin-top:1px;letter-spacing:-0.75px">ERP</span><span class="lbtn" style="margin-left:-2px;margin-top:-1px"><svg style="left:0;top:0" width="31" height="21"><g fill="none" stroke="#000" stroke-width="1"><circle cx="10" cy="5.7" r="1.25" stroke-width="1.1"/><circle cx="10" cy="11" r="1.25" stroke-width="1.1"/><circle cx="10" cy="15.9" r="1.25" stroke-width="1.1"/><path d="M13.2 5.6 H22.2 M13.2 11 H22.2 M13.2 15.9 H22.2" stroke-width="1.3"/></g></svg></span></div></div></div></div>
<div class="a td " style="left:474px;top:717px;width:95px;height:70px;"><div>-</div></div>
<div class="a td c" style="left:579px;top:717px;width:63px;height:70px;"><div>-</div></div>
<div class="a td " style="left:652px;top:717px;width:65px;height:70px;letter-spacing:-0.3px"><div>30.07.2025</div></div>
<div class="a td c" style="left:724px;top:717px;width:73px;height:70px;letter-spacing:-0.3px"><div>30.07.2025<br>19:51:32</div></div>
<div class="a td c" style="left:801px;top:717px;width:73px;height:70px;letter-spacing:-0.3px"><div>30.07.2025<br>22:00:00</div></div>
<div class="a td " style="left:881px;top:717px;width:104px;height:70px;"><div><b>JD S770</b><br>(<span class="lk">2672EM32</span>),<br>(<span class="lk">6935ET31</span>)</div></div>
<div class="a td " style="left:996px;top:717px;width:145px;height:70px;"><div><b>730FD\177149</b> <span class="tw">(<svg class="arr" width="16" height="9" viewBox="0 0 16 9"><path d="M1.2 4.5 H14.8 M4.8 1 L1.2 4.5 L4.8 8 M11.2 1 L14.8 4.5 L11.2 8" stroke="#111" stroke-width="1.8" fill="none"/></svg> 9 м)</span>;<br><b>RD30F\196119</b> <span class="tw">(<svg class="arr" width="16" height="9" viewBox="0 0 16 9"><path d="M1.2 4.5 H14.8 M4.8 1 L1.2 4.5 L4.8 8 M11.2 1 L14.8 4.5 L11.2 8" stroke="#111" stroke-width="1.8" fill="none"/></svg> 9 м)</span></div></div>
<div class="a td " style="left:1151px;top:717px;width:166px;height:70px;"><div>ЛЫСЕНКО АЛЕКСАНДР<br>ВАСИЛЬЕВИЧ; МИТРОФАНОВ<br>АЛЕКСЕЙ ГРИГОРЬЕВИЧ</div></div>
<div class="a td " style="left:1327px;top:717px;width:47px;height:70px;letter-spacing:0px"><div>104-20</div></div>
<div class="a td r" style="left:1384px;top:717px;width:63px;height:70px;"><div><b>4,28</b></div></div>
<div class="a td " style="left:1456px;top:717px;width:110px;height:70px;"><div><div style="display:flex;flex-direction:column;align-items:flex-end;margin-top:0px"><div style="height:16px;line-height:16px">5,04%</div><div class="bar"><div class="fill" style="width:5.5px"></div></div></div></div></div>
<div class="a td r" style="left:1575px;top:717px;width:77px;height:70px;"><div>-</div></div>
<div class="pbtn" style="left:1666px;top:740px"></div>
<svg style="left:0;top:0" width="1" height="1"><path d="M1676.5 750.5 H1687.5 M1682 745 V756" stroke="#000" stroke-width="1.8"/></svg>
<div class="a td r" style="left:1770px;top:717px;width:101px;height:70px;"><div>0,00</div></div>
<div class="a hl" style="left:26px;top:857px;width:1849px;height:1px"></div>
<div class="a dl" style="left:50px;top:787px;width:1px;height:70px"></div>
<div class="a dl" style="left:132px;top:787px;width:1px;height:70px"></div>
<div class="a dl" style="left:220px;top:787px;width:1px;height:70px"></div>
<div class="a dl" style="left:352px;top:787px;width:1px;height:70px"></div>
<div class="a dl" style="left:468px;top:787px;width:1px;height:70px"></div>
<div class="a dl" style="left:574px;top:787px;width:1px;height:70px"></div>
<div class="a dl" style="left:647px;top:787px;width:1px;height:70px"></div>
<div class="a dl" style="left:722px;top:787px;width:1px;height:70px"></div>
<div class="a dl" style="left:799px;top:787px;width:1px;height:70px"></div>
<div class="a dl" style="left:876px;top:787px;width:1px;height:70px"></div>
<div class="a dl" style="left:990px;top:787px;width:1px;height:70px"></div>
<div class="a dl" style="left:1146px;top:787px;width:1px;height:70px"></div>
<div class="a dl" style="left:1322px;top:787px;width:1px;height:70px"></div>
<div class="a dl" style="left:1379px;top:787px;width:1px;height:70px"></div>
<div class="a dl" style="left:1451px;top:787px;width:1px;height:70px"></div>
<div class="a dl" style="left:1570px;top:787px;width:1px;height:70px"></div>
<div class="a dl" style="left:1657px;top:787px;width:1px;height:70px"></div>
<div class="a dl" style="left:1765px;top:787px;width:1px;height:70px"></div>
<svg style="left:0;top:0" width="1" height="1"><path d="M35.5 820.5 L38.6 823.8 L41.7 820.5" fill="none" stroke="#1e9be6" stroke-width="1.9"/></svg>
<div class="a td " style="left:59px;top:790px;width:68px;height:70px;letter-spacing:-0.2px"><div>2819421</div></div>
<svg style="left:0;top:0" width="1" height="1"><g fill="none" stroke="#5f7488"><circle cx="114.4" cy="818.4" r="4.7" stroke-width="1.5"/><path d="M117.8 821.9 L121.7 825.8" stroke-width="2.3" stroke-linecap="round"/></g></svg>
<div class="a td " style="left:137px;top:788px;width:78px;height:70px;"><div>КУКУРУЗА</div></div>
<div class="a td " style="left:225px;top:788px;width:122px;height:70px;"><div>КСС 5291#F1 ИВНЯ<br>2025 ЗЕРНО</div></div>
<div class="a td " style="left:357px;top:787px;width:106px;height:70px;"><div><div style="display:flex;flex-direction:column"><div style="height:16px">УБОРКА</div><div style="height:16px">ЗЕРНОВЫХ (ТН)</div><div style="height:21px;display:flex;align-items:flex-start"><span style="margin-top:1px;letter-spacing:-0.75px">ERP</span><span class="lbtn" style="margin-left:-2px;margin-top:-1px"><svg style="left:0;top:0" width="31" height="21"><g fill="none" stroke="#000" stroke-width="1"><circle cx="10" cy="5.7" r="1.25" stroke-width="1.1"/><circle cx="10" cy="11" r="1.25" stroke-width="1.1"/><circle cx="10" cy="15.9" r="1.25" stroke-width="1.1"/><path d="M13.2 5.6 H22.2 M13.2 11 H22.2 M13.2 15.9 H22.2" stroke-width="1.3"/></g></svg></span></div></div></div></div>
<div class="a td " style="left:474px;top:788px;width:95px;height:70px;"><div>-</div></div>
<div class="a td c" style="left:579px;top:788px;width:63px;height:70px;"><div>-</div></div>
<div class="a td " style="left:652px;top:788px;width:65px;height:70px;letter-spacing:-0.3px"><div>30.07.2025</div></div>
<div class="a td c" style="left:724px;top:788px;width:73px;height:70px;letter-spacing:-0.3px"><div>30.07.2025<br>20:48:56</div></div>
<div class="a td c" style="left:801px;top:788px;width:73px;height:70px;letter-spacing:-0.3px"><div>30.07.2025<br>20:55:12</div></div>
<div class="a td " style="left:881px;top:788px;width:104px;height:70px;"><div><b>JD S770</b><br>(<span class="lk">2672EM32</span>)</div></div>
<div class="a td " style="left:996px;top:788px;width:145px;height:70px;"><div><b>RD30F\196119</b> <span class="tw">(<svg class="arr" width="16" height="9" viewBox="0 0 16 9"><path d="M1.2 4.5 H14.8 M4.8 1 L1.2 4.5 L4.8 8 M11.2 1 L14.8 4.5 L11.2 8" stroke="#111" stroke-width="1.8" fill="none"/></svg> 9 м)</span></div></div>
<div class="a td " style="left:1151px;top:788px;width:166px;height:70px;"><div>ЛЫСЕНКО АЛЕКСАНДР<br>ВАСИЛЬЕВИЧ</div></div>
<div class="a td " style="left:1327px;top:788px;width:47px;height:70px;letter-spacing:0px"><div>104-19</div></div>
<div class="a td r" style="left:1384px;top:788px;width:63px;height:70px;"><div><b>0,19</b></div></div>
<div class="a td " style="left:1456px;top:788px;width:110px;height:70px;"><div><div style="display:flex;flex-direction:column;align-items:flex-end;margin-top:0px"><div style="height:16px;line-height:16px">0,11%</div><div class="bar"></div></div></div></div>
<div class="a td r" style="left:1575px;top:788px;width:77px;height:70px;"><div>-</div></div>
<div class="pbtn" style="left:1666px;top:811px"></div>
<svg style="left:0;top:0" width="1" height="1"><path d="M1676.5 821.5 H1687.5 M1682 816 V827" stroke="#000" stroke-width="1.8"/></svg>
<div class="a td r" style="left:1770px;top:788px;width:101px;height:70px;"><div>0,00</div></div>
<div class="a hl" style="left:26px;top:928px;width:1849px;height:1px"></div>
<div class="a dl" style="left:50px;top:858px;width:1px;height:70px"></div>
<div class="a dl" style="left:132px;top:858px;width:1px;height:70px"></div>
<div class="a dl" style="left:220px;top:858px;width:1px;height:70px"></div>
<div class="a dl" style="left:352px;top:858px;width:1px;height:70px"></div>
<div class="a dl" style="left:468px;top:858px;width:1px;height:70px"></div>
<div class="a dl" style="left:574px;top:858px;width:1px;height:70px"></div>
<div class="a dl" style="left:647px;top:858px;width:1px;height:70px"></div>
<div class="a dl" style="left:722px;top:858px;width:1px;height:70px"></div>
<div class="a dl" style="left:799px;top:858px;width:1px;height:70px"></div>
<div class="a dl" style="left:876px;top:858px;width:1px;height:70px"></div>
<div class="a dl" style="left:990px;top:858px;width:1px;height:70px"></div>
<div class="a dl" style="left:1146px;top:858px;width:1px;height:70px"></div>
<div class="a dl" style="left:1322px;top:858px;width:1px;height:70px"></div>
<div class="a dl" style="left:1379px;top:858px;width:1px;height:70px"></div>
<div class="a dl" style="left:1451px;top:858px;width:1px;height:70px"></div>
<div class="a dl" style="left:1570px;top:858px;width:1px;height:70px"></div>
<div class="a dl" style="left:1657px;top:858px;width:1px;height:70px"></div>
<div class="a dl" style="left:1765px;top:858px;width:1px;height:70px"></div>
<svg style="left:0;top:0" width="1" height="1"><path d="M35.5 891.5 L38.6 894.8 L41.7 891.5" fill="none" stroke="#1e9be6" stroke-width="1.9"/></svg>
<div class="a td " style="left:59px;top:861px;width:68px;height:70px;letter-spacing:-0.2px"><div>3554592</div></div>
<svg style="left:0;top:0" width="1" height="1"><g fill="none" stroke="#5f7488"><circle cx="114.4" cy="889.4" r="4.7" stroke-width="1.5"/><path d="M117.8 892.9 L121.7 896.8" stroke-width="2.3" stroke-linecap="round"/></g></svg>
<div class="a td " style="left:137px;top:859px;width:78px;height:70px;"><div>ПШЕНИЦА<br>ОЗИМАЯ</div></div>
<div class="a td " style="left:225px;top:859px;width:122px;height:70px;"><div>АЛЕКСЕИЧ#ЭС ИВНЯ<br>2025 ЗЕРНО</div></div>
<div class="a td " style="left:357px;top:858px;width:106px;height:70px;"><div><div style="display:flex;flex-direction:column"><div style="height:16px">УБОРКА</div><div style="height:16px">ЗЕРНОВЫХ (ТН)</div><div style="height:21px;display:flex;align-items:flex-start"><span style="margin-top:1px;letter-spacing:-0.75px">ERP</span><span class="lbtn" style="margin-left:-2px;margin-top:-1px"><svg style="left:0;top:0" width="31" height="21"><g fill="none" stroke="#000" stroke-width="1"><circle cx="10" cy="5.7" r="1.25" stroke-width="1.1"/><circle cx="10" cy="11" r="1.25" stroke-width="1.1"/><circle cx="10" cy="15.9" r="1.25" stroke-width="1.1"/><path d="M13.2 5.6 H22.2 M13.2 11 H22.2 M13.2 15.9 H22.2" stroke-width="1.3"/></g></svg></span></div></div></div></div>
<div class="a td " style="left:474px;top:859px;width:95px;height:70px;"><div>-</div></div>
<div class="a td c" style="left:579px;top:859px;width:63px;height:70px;"><div>-</div></div>
<div class="a td " style="left:652px;top:859px;width:65px;height:70px;letter-spacing:-0.3px"><div>30.07.2025</div></div>
<div class="a td c" style="left:724px;top:859px;width:73px;height:70px;letter-spacing:-0.3px"><div>30.07.2025<br>19:57:29</div></div>
<div class="a td c" style="left:801px;top:859px;width:73px;height:70px;letter-spacing:-0.3px"><div>30.07.2025<br>20:24:27</div></div>
<div class="a td " style="left:881px;top:859px;width:104px;height:70px;"><div><b>JD S770</b><br>(<span class="lk">2672EM32</span>),<br>(<span class="lk">6936ET31</span>)</div></div>
<div class="a td " style="left:996px;top:859px;width:145px;height:70px;"><div><b>730FD\177218</b> <span class="tw">(<svg class="arr" width="16" height="9" viewBox="0 0 16 9"><path d="M1.2 4.5 H14.8 M4.8 1 L1.2 4.5 L4.8 8 M11.2 1 L14.8 4.5 L11.2 8" stroke="#111" stroke-width="1.8" fill="none"/></svg> 9 м)</span>;<br><b>RD30F\196119</b> <span class="tw">(<svg class="arr" width="16" height="9" viewBox="0 0 16 9"><path d="M1.2 4.5 H14.8 M4.8 1 L1.2 4.5 L4.8 8 M11.2 1 L14.8 4.5 L11.2 8" stroke="#111" stroke-width="1.8" fill="none"/></svg> 9 м)</span></div></div>
<div class="a td " style="left:1151px;top:859px;width:166px;height:70px;"><div>ЛЫСЕНКО АЛЕКСАНДР<br>ВАСИЛЬЕВИЧ; СОКОЛОВ<br>ИВАН ВАСИЛЬЕВИЧ</div></div>
<div class="a td " style="left:1327px;top:859px;width:47px;height:70px;letter-spacing:0px"><div>104-21</div></div>
<div class="a td r" style="left:1384px;top:859px;width:63px;height:70px;"><div><b>0,21</b></div></div>
<div class="a td " style="left:1456px;top:859px;width:110px;height:70px;"><div><div style="display:flex;flex-direction:column;align-items:flex-end;margin-top:0px"><div style="height:16px;line-height:16px">0,38%</div><div class="bar"></div></div></div></div>
<div class="a td r" style="left:1575px;top:859px;width:77px;height:70px;"><div>-</div></div>
<div class="pbtn" style="left:1666px;top:882px"></div>
<svg style="left:0;top:0" width="1" height="1"><path d="M1676.5 892.5 H1687.5 M1682 887 V898" stroke="#000" stroke-width="1.8"/></svg>
<div class="a td r" style="left:1770px;top:859px;width:101px;height:70px;"><div>0,00</div></div>
<div class="a" style="left:93.5px;top:442.8px;width:46px;height:46px;border-radius:50%;border:4.2px solid #ef3b40;background:#fff"></div>
<svg style="left:0;top:0" width="1" height="1"><g fill="none" stroke="#72879a"><circle cx="111.7" cy="460.7" r="9.4" stroke-width="2.3"/><path d="M118.6 467.6 L127.4 476.2" stroke-width="3.8" stroke-linecap="square"/></g></svg>
</body></html>
